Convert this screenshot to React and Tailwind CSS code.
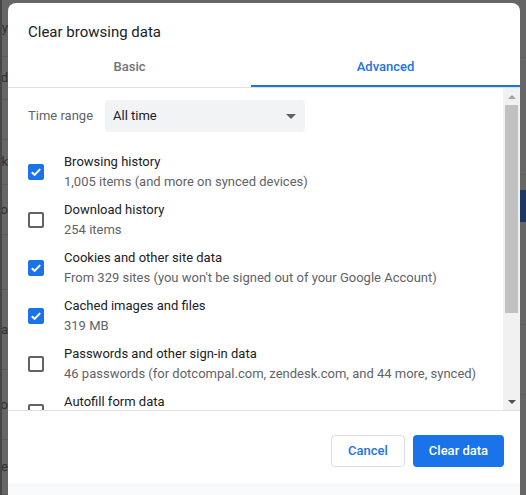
import { useState } from "react";

const items = [
    { label: "Browsing history", sub: "1,005 items (and more on synced devices)", on: true },
    { label: "Download history", sub: "254 items", on: false },
    { label: "Cookies and other site data", sub: "From 329 sites (you won't be signed out of your Google Account)", on: true },
    { label: "Cached images and files", sub: "319 MB", on: true },
    { label: "Passwords and other sign-in data", sub: "46 passwords (for dotcompal.com, zendesk.com, and 44 more, synced)", on: false },
    { label: "Autofill form data", sub: "4 suggestions (synced)", on: false },
];

// fragments of the dimmed page that peek out on the left
const pageRows = [
    { h: 57, t: "ry" },
    { h: 43, t: "ld" },
    { h: 40, t: "" },
    { h: 45, t: "ck" },
    { h: 50, t: "ro" },
    { h: 55, t: "" },
    { h: 80, t: "ea" },
    { h: 70, t: "rro" },
    { h: 55, t: "cfe" },
];

function Checkbox({ checked, onClick }) {
    if (checked) {
        return (
            <button onClick={onClick} className="w-[16px] h-[16px] rounded-[2px] bg-[#1a73e8] flex items-center justify-center shrink-0">
                <svg width="12" height="12" viewBox="0 0 12 12">
                    <path d="M1.8 6.2l2.8 2.7 5.6-5.8" fill="none" stroke="white" strokeWidth="2" />
                </svg>
            </button>
        );
    }
    return <button onClick={onClick} className="w-[16px] h-[16px] rounded-[2px] border-2 border-[#5f6368] shrink-0" />;
}

export default function App() {
    const [tab, setTab] = useState("advanced");
    const [checks, setChecks] = useState(items.map((i) => i.on));

    const toggle = (idx) => setChecks(checks.map((c, i) => (i === idx ? !c : c)));

    return (
        <div className="w-[526px] h-[495px] bg-[#666666] flex overflow-hidden" style={{ fontFamily: "Roboto, 'Noto Sans', sans-serif" }}>
            {/* Left page strip */}
            <div className="w-[8px] shrink-0 flex">
                <div className="w-[2px] bg-[#474747]" />
                <div className="flex-1 flex flex-col overflow-hidden">
                    {pageRows.map((r, i) => (
                        <div key={i} style={{ height: r.h }} className="border-b border-[#5c5c5c] flex items-center justify-end overflow-hidden">
                            <span className="text-[13px] text-[#2e2e2e] whitespace-nowrap">{r.t}</span>
                        </div>
                    ))}
                </div>
            </div>

            {/* Dialog */}
            <div className="w-[512px] shrink-0 mt-[3px] bg-white rounded-t-[8px] flex flex-col">
                <div className="h-[45px] pt-[19px] pl-[20px] text-[15px] leading-[20px] text-[#202124]">
                    Clear browsing data
                </div>

                {/* Tabs */}
                <div className="flex border-b border-[#e0e0e0]">
                    <button onClick={() => setTab("basic")} className="w-[243px] flex flex-col">
                        <div className={`h-[37px] flex items-center justify-center text-[13px] font-medium ${tab === "basic" ? "text-[#1a73e8]" : "text-[#6f7378]"}`}>
                            Basic
                        </div>
                        <div className={`h-[2px] ${tab === "basic" ? "bg-[#1a73e8]" : ""}`} />
                    </button>
                    <button onClick={() => setTab("advanced")} className="flex-1 flex flex-col">
                        <div className={`h-[37px] flex items-center justify-center text-[13px] font-medium ${tab === "advanced" ? "text-[#1a73e8]" : "text-[#6f7378]"}`}>
                            Advanced
                        </div>
                        <div className={`h-[2px] ${tab === "advanced" ? "bg-[#1a73e8]" : ""}`} />
                    </button>
                </div>

                {/* Scroll area */}
                <div className="h-[323px] flex border-b border-[#e0e0e0]">
                    <div className="flex-1 overflow-hidden pl-[20px] pt-[12px]">
                        <div className="flex items-center h-[32px]">
                            <span className="w-[77px] text-[13px] text-[#5f6368]">Time range</span>
                            <div className="w-[200px] h-[32px] rounded-[4px] bg-[#f1f3f4] flex items-center justify-between pl-[8px] pr-[9px]">
                                <span className="text-[13px] text-[#202124]">All time</span>
                                <div className="w-0 h-0 border-l-[5px] border-r-[5px] border-t-[5px] border-l-transparent border-r-transparent border-t-[#5f6368]" />
                            </div>
                        </div>

                        <div className="mt-[16px] flex flex-col">
                            {items.map((it, i) => (
                                <div key={it.label} className="h-[48px] shrink-0 flex items-center gap-[20px]">
                                    <Checkbox checked={checks[i]} onClick={() => toggle(i)} />
                                    <div className="flex flex-col text-[13px] leading-[20px]">
                                        <span className="text-[#202124]">{it.label}</span>
                                        <span className="text-[#5f6368] whitespace-nowrap">{it.sub}</span>
                                    </div>
                                </div>
                            ))}
                        </div>
                    </div>

                    {/* Scrollbar */}
                    <div className="w-[17px] bg-[#f1f1f1] flex flex-col items-center">
                        <div className="h-[17px] flex items-center justify-center">
                            <div className="w-0 h-0 border-l-[4px] border-r-[4px] border-b-[4px] border-l-transparent border-r-transparent border-b-[#a3a3a3]" />
                        </div>
                        <div className="w-[13px] h-[208px] bg-[#c1c1c1]" />
                        <div className="flex-1" />
                        <div className="h-[17px] flex items-center justify-center">
                            <div className="w-0 h-0 border-l-[4px] border-r-[4px] border-t-[4px] border-l-transparent border-r-transparent border-t-[#505050]" />
                        </div>
                    </div>
                </div>

                {/* Footer */}
                <div className="h-[72px] flex justify-end items-start gap-[8px] pt-[24px] pr-[16px]">
                    <button className="w-[74px] h-[32px] rounded-[4px] border border-[#dadce0] text-[13px] font-medium text-[#1a73e8]">
                        Cancel
                    </button>
                    <button className="w-[91px] h-[32px] rounded-[4px] bg-[#1a73e8] text-[13px] font-medium text-white">
                        Clear data
                    </button>
                </div>
                <div className="flex-1 bg-[#f8f9fa]" />
            </div>

            {/* Right page strip */}
            <div className="flex-1 flex flex-col">
                <div className="h-[58px] border-b border-[#616161]" />
                <div className="h-[117px] border-b border-[#616161]" />
                <div className="h-[15px]" />
                <div className="h-[32px] bg-[#1b365f]" />
                <div className="h-[103px] border-b border-[#616161]" />
                <div className="h-[70px] border-b border-[#616161]" />
            </div>
        </div>
    );
}
